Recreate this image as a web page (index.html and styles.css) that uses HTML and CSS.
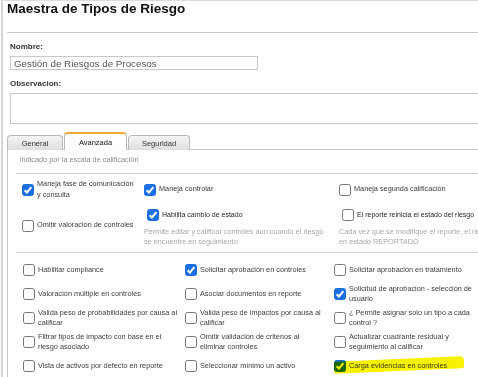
FILE: index.html
```html
<!DOCTYPE html>
<html>

<head>
    <title>Maestra de Tipos de Riesgo</title>
    <link rel="stylesheet" href="styles.css">
</head>

<body>
    <div class="page">
        <h1 class="page-title">Maestra de Tipos de Riesgo</h1>

        <!-- datos generales -->
        <div class="form-area">
            <label class="field-label" for="nombre">Nombre:</label>
            <input class="text-input" id="nombre" type="text" value="Gestión de Riesgos de Procesos">

            <label class="field-label" for="observacion">Observacion:</label>
            <textarea class="text-area" id="observacion"></textarea>

            <!-- pestañas -->
            <div class="tabs">
                <div class="tab">General</div>
                <div class="tab active">Avanzada</div>
                <div class="tab">Seguridad</div>
            </div>

            <div class="tab-panel">
                <p class="scale-note">indicado por la escala de calificación</p>

                <div class="options-top">
                    <label class="option">
                        <input type="checkbox" checked>
                        <span class="option-text narrow">Maneja fase de comunicación y consulta</span>
                    </label>
                    <label class="option">
                        <input type="checkbox" checked>
                        <span class="option-text">Maneja controlar</span>
                    </label>
                    <label class="option">
                        <input type="checkbox">
                        <span class="option-text">Maneja segunda calificación</span>
                    </label>

                    <label class="option raised">
                        <input type="checkbox">
                        <span class="option-text">Omitir valoración de controles</span>
                    </label>
                    <div class="option-block">
                        <label class="option sub">
                            <input type="checkbox" checked>
                            <span class="option-text strong">Habilita cambio de estado</span>
                        </label>
                        <p class="help">Permite editar y calificar controles aun cuando el riesgo se encuentre en seguimiento</p>
                    </div>
                    <div class="option-block">
                        <label class="option sub">
                            <input type="checkbox">
                            <span class="option-text strong">El reporte reinicia el estado del riesgo</span>
                        </label>
                        <p class="help wide">Cada vez que se modifique el reporte, el riesgo quedará<br>en estado REPORTADO</p>
                    </div>
                </div>

                <div class="options-grid">
                    <label class="option">
                        <input type="checkbox">
                        <span class="option-text">Habilitar compliance</span>
                    </label>
                    <label class="option">
                        <input type="checkbox" checked>
                        <span class="option-text">Solicitar aprobación en controles</span>
                    </label>
                    <label class="option">
                        <input type="checkbox">
                        <span class="option-text">Solicitar aprobación en tratamiento</span>
                    </label>

                    <label class="option">
                        <input type="checkbox">
                        <span class="option-text">Valoración múltiple en controles</span>
                    </label>
                    <label class="option">
                        <input type="checkbox">
                        <span class="option-text">Asociar documentos en reporte</span>
                    </label>
                    <label class="option">
                        <input type="checkbox" checked>
                        <span class="option-text">Solicitud de aprobacion - selección de usuario</span>
                    </label>

                    <label class="option">
                        <input type="checkbox">
                        <span class="option-text">Valida peso de probabilidades por causa al calificar</span>
                    </label>
                    <label class="option">
                        <input type="checkbox">
                        <span class="option-text">Valida peso de impactos por causa al calificar</span>
                    </label>
                    <label class="option">
                        <input type="checkbox">
                        <span class="option-text">¿ Permite asignar solo un tipo a cada control ?</span>
                    </label>

                    <label class="option">
                        <input type="checkbox">
                        <span class="option-text">Filtrar tipos de impacto con base en el riesgo asociado</span>
                    </label>
                    <label class="option">
                        <input type="checkbox">
                        <span class="option-text">Omitir validación de criterios al eliminar controles</span>
                    </label>
                    <label class="option">
                        <input type="checkbox">
                        <span class="option-text">Actualizar cuadrante residual y seguimiento al calificar</span>
                    </label>

                    <label class="option">
                        <input type="checkbox">
                        <span class="option-text">Vista de activos por defecto en reporte</span>
                    </label>
                    <label class="option">
                        <input type="checkbox">
                        <span class="option-text">Seleccionar mínimo un activo</span>
                    </label>
                    <label class="option marked">
                        <input type="checkbox" checked>
                        <span class="option-text">Carga evidencias en controles</span>
                        <span class="marker"></span>
                    </label>
                </div>
            </div>
        </div>
    </div>
</body>

</html>
```

FILE: styles.css
```css
html,
body {
    margin: 0;
    overflow: hidden;
    background: #fff;
    font-family: "Liberation Sans", Arial, sans-serif;
}

/* contenedor principal */
.page {
    width: 600px;
    margin-left: 1px;
    border-left: 2px solid #d4d4d4;
    border-top: 1px solid #dcdcdc;
    min-height: 400px;
}

.page-title {
    margin: 0 0 15px 0;
    padding-left: 4px;
    font-size: 13.5px;
    line-height: 16px;
    font-weight: bold;
    color: #111;
}

.form-area {
    margin-left: 4px;
    border-top: 1px solid #c9c9c9;
}

.field-label {
    display: block;
    margin: 9px 0 4px 3px;
    font-size: 8px;
    line-height: 10px;
    font-weight: bold;
    color: #333;
}

.text-input {
    display: block;
    box-sizing: border-box;
    width: 248px;
    height: 14px;
    margin-left: 3px;
    padding: 0 3px;
    border: 1px solid #c8c8c8;
    font-family: inherit;
    font-size: 9.8px;
    color: #555;
    outline: none;
}

.text-input + .field-label {
    margin-top: 9px;
}

.text-area {
    display: block;
    box-sizing: border-box;
    width: 620px;
    height: 31px;
    margin: 0 0 0 3px;
    border: 1px solid #c8c8c8;
    resize: none;
}

/* pestañas */
.tabs {
    display: flex;
    align-items: flex-end;
    gap: 1px;
    margin-top: 8px;
    margin-bottom: -1px;
    position: relative;
    z-index: 1;
}

.tab {
    box-sizing: border-box;
    height: 15px;
    width: 56px;
    border: 1px solid #b9b9b9;
    border-bottom: none;
    border-radius: 4px 4px 0 0;
    background: linear-gradient(#f5f5f5, #dedede);
    font-size: 7.5px;
    line-height: 15px;
    text-align: center;
    color: #333;
}

.tab.active {
    width: 63px;
    height: 18px;
    border-top: 2px solid #f2a93b;
    background: #fff;
    line-height: 17px;
    color: #111;
}

.tab:last-child {
    width: 62px;
}

.tab-panel {
    border-top: 1px solid #c9c9c9;
    border-left: 1px solid #c9c9c9;
    padding-left: 8px;
    min-height: 240px;
}

.scale-note {
    margin: 5px 0 8px 4px;
    font-size: 7.3px;
    line-height: 10px;
    color: #8a8a8a;
}

/* opciones */
.options-top {
    display: grid;
    grid-template-columns: 122px 195px 1fr;
    row-gap: 9px;
    align-items: center;
    border-top: 1px solid #cfcfcf;
    padding: 5px 0 5px 6px;
}

.options-grid {
    display: grid;
    grid-template-columns: 162px 149px 1fr;
    grid-auto-rows: 24px;
    align-items: center;
    border-top: 1px solid #cfcfcf;
    padding: 5px 0 0 7px;
}

.option {
    display: flex;
    align-items: center;
    gap: 3px;
    position: relative;
}

.option.raised {
    margin-bottom: 5px;
}

.option-text {
    font-size: 7.3px;
    line-height: 10.5px;
    color: #3c3c3c;
}

.options-grid .option:nth-child(3n+1) .option-text {
    max-width: 142px;
}

.options-grid .option:nth-child(3n+2) .option-text {
    max-width: 121px;
}

.options-grid .option:nth-child(3n) .option-text {
    max-width: 126px;
}

.option-text.narrow {
    max-width: 100px;
}

.option-text.strong {
    font-size: 7px;
    color: #1e1e1e;
}

.option.sub {
    margin-left: 3px;
}

.help {
    margin: 6px 0 0 0;
    max-width: 180px;
    font-size: 7.3px;
    line-height: 10px;
    color: #a8a8a8;
}

.help.wide {
    max-width: none;
    white-space: nowrap;
}

.option input {
    appearance: none;
    flex: none;
    box-sizing: border-box;
    width: 12px;
    height: 12px;
    margin: 0;
    border: 1px solid #767676;
    border-radius: 2.5px;
    background: #fff;
}

.option input:checked {
    border-color: #1c6fe3;
    background: #1c6fe3 url("data:image/svg+xml;utf8,<svg xmlns='http://www.w3.org/2000/svg' viewBox='0 0 12 12'><path d='M2.6 6.2 L4.9 8.5 L9.4 3.2' fill='none' stroke='white' stroke-width='2'/></svg>") center / 12px 12px no-repeat;
}

/* marcador amarillo */
.marker {
    position: absolute;
    left: 0;
    top: -1px;
    width: 130px;
    height: 12px;
    background: #f6f200;
    border-radius: 2px 4px 3px 1px;
    transform: rotate(-2.5deg);
    mix-blend-mode: multiply;
}
```
